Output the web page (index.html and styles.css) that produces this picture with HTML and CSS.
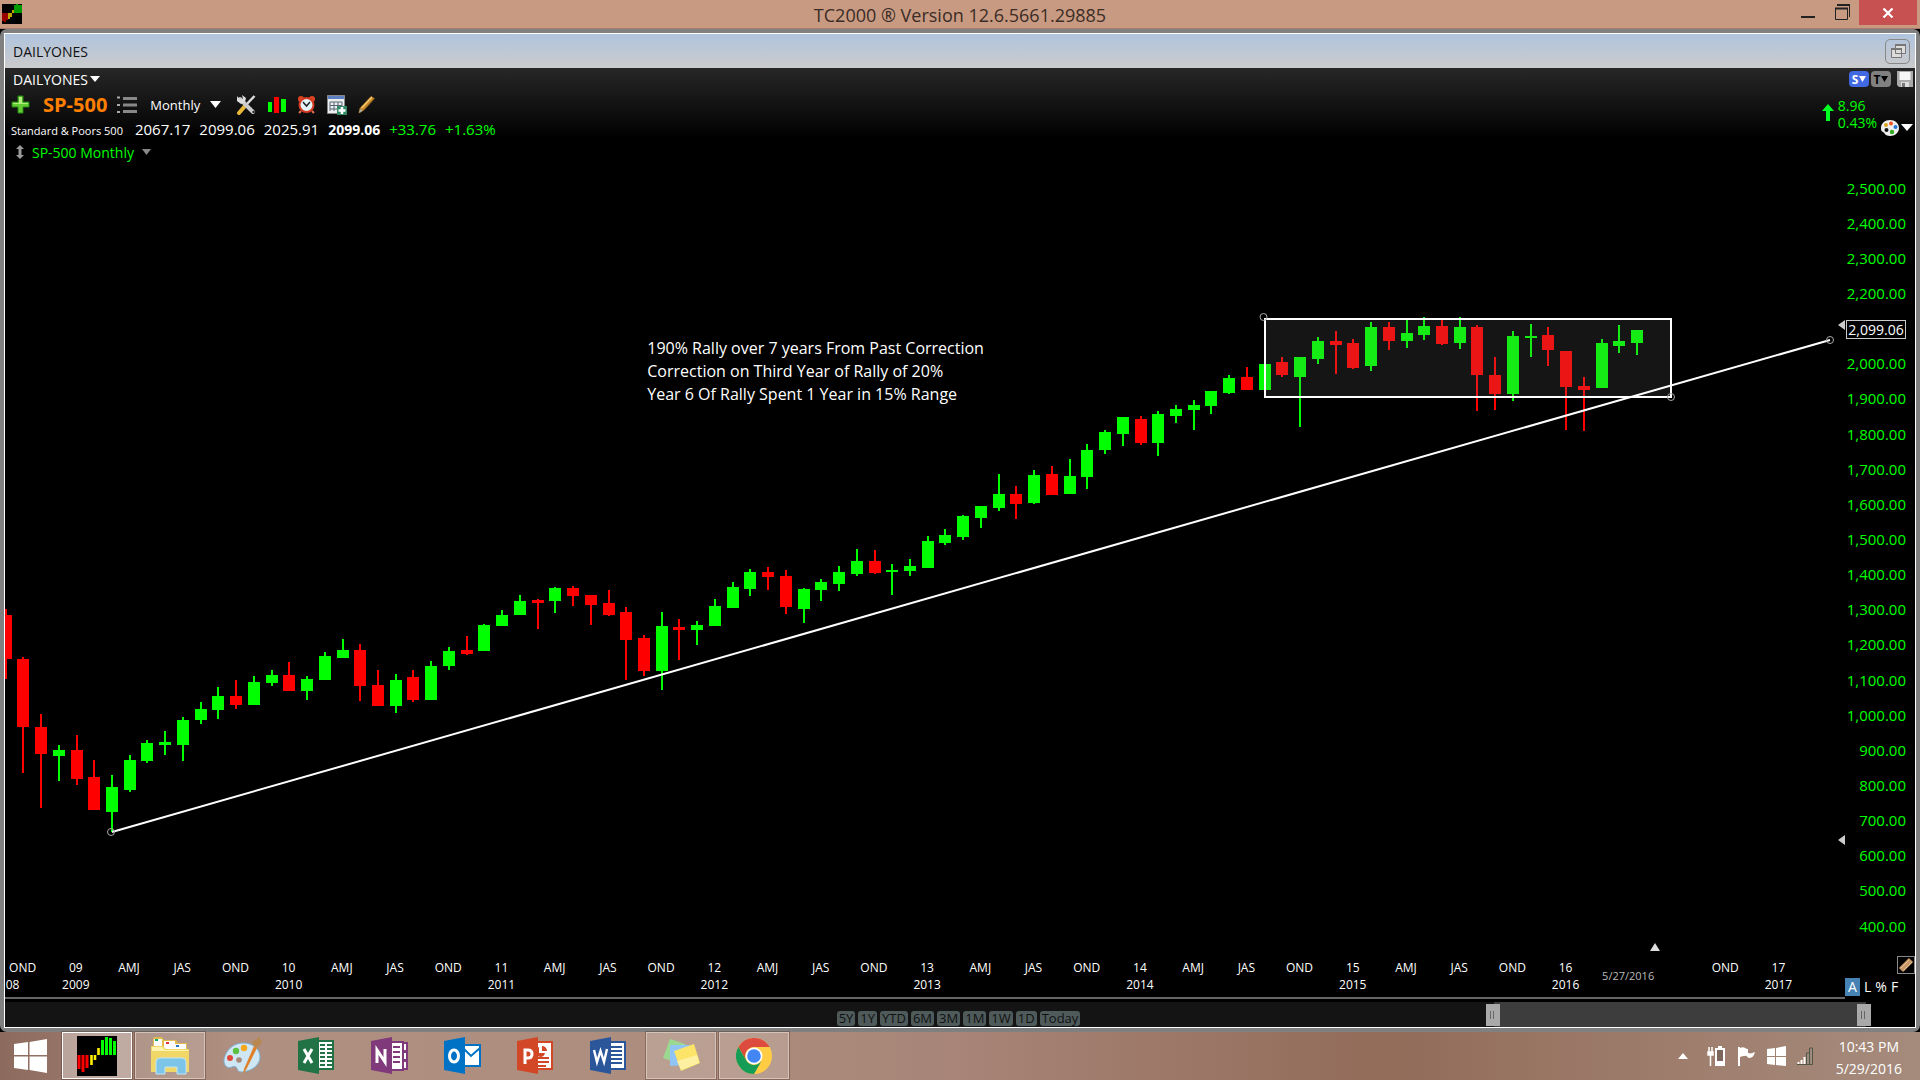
FILE: index.html
```html
<!DOCTYPE html>
<html lang="en">
<head>
    <meta charset="UTF-8">
    <meta name="viewport" content="width=device-width, initial-scale=1.0">
    <title>TC2000 ® Version 12.6.5661.29885</title>
    <link rel="stylesheet" href="styles.css">
</head>
<body>

    <header class="titlebar">
        <svg class="app-icon" viewBox="0 0 20 20"><rect width="20" height="20" fill="#000"/><path d="M1 9v8M3 9v9M5 9v7" stroke="#c00" stroke-width="1.5"/><path d="M7 9v6M9 9v4M11 6v3" stroke="#fd0" stroke-width="1.5"/><path d="M13 1v8M15 0v9M17 1v8M19 1v8" stroke="#0c0" stroke-width="1.5"/></svg>
        <h1>TC2000 ® Version 12.6.5661.29885</h1>
        <div class="window-buttons">
            <button aria-label="Minimize"><svg width="14" height="16" viewBox="0 0 14 16"><path d="M0 13h14" stroke="#222" stroke-width="2"/></svg></button>
            <button aria-label="Restore"><svg width="15" height="16" viewBox="0 0 15 16"><path d="M.5 4v11.5h12V4M2 .5h12.5V13" fill="none" stroke="#222"/><path d="M0 4.500h13M2 1h13" stroke="#222" stroke-width="2"/></svg></button>
            <button class="close" aria-label="Close"><svg width="12" height="10" viewBox="0 0 12 10"><path d="M1.500 .5l9 9m0-9l-9 9" stroke="#fff" stroke-width="2.200"/></svg></button>
        </div>
    </header>

    <main class="frame">
        <div class="frame-header">
            <h2>DAILYONES</h2>
            <button class="restore" aria-label="Restore panel"><svg width="16" height="16" viewBox="0 0 16 16"><path d="M5.500 1.500h10v9h-10zM1.500 5.500h10v9h-10z" fill="#dcdcdc" stroke="#777"/><path d="M5 2h11M1 6h11" stroke="#777" stroke-width="2"/></svg></button>
        </div>

        <div class="panel">
            <div class="top">
                <div class="top-left">
                    <div class="row layout-row">
                        <button class="menu">DAILYONES<svg width="10" height="6" viewBox="0 0 10 6"><path d="M0 0h10l-5 6z" fill="#fff"/></svg></button>
                    </div>
                    <div class="row tools">
                        <button aria-label="Add"><svg width="19" height="19" viewBox="0 0 19 19"><path d="M7 1h5v6h6v5h-6v6H7v-6H1V7h6z" fill="#6c3" stroke="#281"/><path d="M8 2h3v6h6v1H2V8h6z" fill="#b4ec80"/></svg></button>
                        <button class="symbol">SP-500</button>
                        <button class="list" aria-label="Watchlist"><svg width="20" height="18" viewBox="0 0 20 18"><path d="M6 2.500h14M6 9h14M6 15.500h14" stroke="#888" stroke-width="3"/><path d="M0 1.500h3M0 9h3M0 16h3" stroke="#aaa" stroke-width="2"/></svg></button>
                        <button class="period">Monthly<svg width="11" height="7" viewBox="0 0 11 7"><path d="M0 0h11L5.500 7z" fill="#fff"/></svg></button>
                        <button class="tool" aria-label="Settings"><svg width="21" height="20" viewBox="0 0 21 20"><path d="M18.500 1L9 11" stroke="#ddd" stroke-width="2.500"/><path d="M9 11l-6 7" stroke="#e8b838" stroke-width="4" stroke-linecap="round"/><path d="M4 4l13 13" stroke="#ccc" stroke-width="4" stroke-linecap="round"/><path d="M1 1v5l4 3 4-2 1-4-4-3 1 4-3 1z" fill="#ddd"/><circle cx="17.500" cy="17" r="1.200" fill="#222"/></svg></button>
                        <button class="tool" aria-label="Chart type"><svg width="18" height="18" viewBox="0 0 18 18"><path d="M0 6h4v10H0zM13 3h5v13h-5z" fill="#0f0"/><path d="M6 1h5v16H6z" fill="red"/></svg></button>
                        <button class="tool" aria-label="Alerts"><svg width="19" height="19" viewBox="0 0 19 19"><path d="M4 16l-2 2M15 16l2 2" stroke="#e87050" stroke-width="2"/><circle cx="4" cy="4" r="3" fill="#d42"/><circle cx="15" cy="4" r="3" fill="#d42"/><circle cx="9.500" cy="10" r="7" fill="#e4f4fa" stroke="#d43a20" stroke-width="2"/><path d="M6 7l3.500 4L13 7" fill="none" stroke="#222" stroke-width="1.500"/></svg></button>
                        <button class="tool" aria-label="Calendar"><svg width="20" height="20" viewBox="0 0 20 20"><path d="M.5.5h17v18H.5z" fill="#eee" stroke="#888"/><path d="M1 1h16v3H1z" fill="#5b7fc0"/><path d="M3 7h12M3 10.500h12M3 14h12M3 7v9M7 7v9M11 7v9M15 7v4" stroke="#567" fill="none"/><path d="M10 11h10v9H10z" fill="#386"/><path d="M15 12v7M11.500 15.500h7" stroke="#fff" stroke-width="2.500"/></svg></button>
                        <button class="tool" aria-label="Draw"><svg width="18" height="19" viewBox="0 0 18 19"><path d="M1 18l1-5L13 1.500l3.500 2L6 15z" fill="#c8892c" stroke="#8a5a18"/><path d="M3.500 13L14 2" stroke="#f4cc70" stroke-width="1.500"/><path d="M1 18l1-4 3 1.500z" fill="#aaa"/></svg></button>
                    </div>
                    <div class="row quote">
                        <span class="name">Standard &amp; Poors 500</span>
                        <span>2067.17</span><span>2099.06</span><span>2025.91</span><strong>2099.06</strong>
                        <span class="up">+33.76</span><span class="up">+1.63%</span>
                    </div>
                    <div class="row">
                        <button class="legend"><svg width="8" height="14" viewBox="0 0 8 14"><path d="M4 0l4 4H5.500v6H8l-4 4-4-4h2.500V4H0z" fill="#999"/></svg>SP-500 Monthly<svg width="9" height="6" viewBox="0 0 9 6"><path d="M0 0h9L4.500 6z" fill="#888"/></svg></button>
                    </div>
                </div>
                <div class="top-right">
                    <div class="badges">
                        <button class="badge blue">S<svg width="7" height="6" viewBox="0 0 7 6"><path d="M0 0h7L3.500 6z" fill="#fff"/></svg></button>
                        <button class="badge">T<svg width="7" height="6" viewBox="0 0 7 6"><path d="M0 0h7L3.500 6z"/></svg></button>
                        <button class="save" aria-label="Save"><svg width="16" height="16" viewBox="0 0 16 16"><path d="M0 0h16v16H2l-2-2z" fill="#aaa"/><path d="M2.500 1h11v8h-11z" fill="#f6f6f6"/><path d="M4 11h8v5H4z" fill="#ddd"/><path d="M5 12h3v4H5z" fill="#777"/></svg></button>
                    </div>
                    <div class="change">
                        <svg width="12" height="17" viewBox="0 0 12 17"><path d="M6 0l6 7H8v10H4V7H0z" fill="#0f2"/></svg>
                        <p>8.96<br>0.43%</p>
                        <button class="palette" aria-label="Colors"><svg width="32" height="16" viewBox="0 0 32 16"><path d="M9 0c5 0 9 3.500 9 8s-4 8-9 8-5-3-7-4-2-2-2-4c0-4.500 4-8 9-8z" fill="#eee"/><circle cx="5" cy="5" r="2" fill="#dba520"/><circle cx="10" cy="3.500" r="2" fill="#e52"/><circle cx="14.500" cy="7" r="2" fill="#27d"/><circle cx="11" cy="12" r="2.200" fill="#3a2"/><circle cx="5.500" cy="10" r="2" fill="#111"/><path d="M20 4h12l-6 7z" fill="#fff"/></svg></button>
                    </div>
                </div>
            </div>

            <div class="chart">
                <div class="plot">
                    <svg id="candles" viewBox="5 170 1835 773" preserveAspectRatio="none">
                        <g id="bars"></g>
                        <rect x="1265" y="319" width="406" height="78" fill="#808080" fill-opacity=".16" stroke="#fff" stroke-width="2"/>
                        <path d="M112 832L1830 340" stroke="#fff" stroke-width="2"/>
                        <g fill="none" stroke="#aaa"><circle cx="111" cy="832" r="3.500"/><circle cx="1830" cy="340" r="3.500"/><circle cx="1263.500" cy="317" r="3.500"/><circle cx="1671" cy="397" r="3.500"/></g>
                        <path d="M1838 325l7-5v10zM1838 840l7-5v10z" fill="#ccc"/>
                    </svg>
                    <p class="note">190% Rally over 7 years From Past Correction<br>Correction on Third Year of Rally of 20%<br>Year 6 Of Rally Spent 1 Year in 15% Range</p>
                </div>
                <div class="prices" id="prices"></div>
            </div>

            <div class="bottom">
                <div class="dates">
                    <div class="marker"><svg width="10" height="8" viewBox="0 0 10 8"><path d="M5 0l5 8H0z" fill="#ddd"/></svg></div>
                    <div class="ticks" id="ticks"></div>
                    <div class="last-date">5/27/2016</div>
                </div>
                <div class="scale">
                    <button class="edit" aria-label="Edit scale"><svg width="16" height="16" viewBox="0 0 16 16"><path d="M3 13L13 3" stroke="#c89a6a" stroke-width="6"/><path d="M3 11l8-8M6 13l8-8" stroke="#f0d0a0" stroke-dasharray="2 1"/></svg></button>
                    <div class="modes"><button class="on">A</button><button>L</button><button>%</button><button>F</button></div>
                </div>
            </div>

            <div class="scrubber">
                <div class="ranges"><button>5Y</button><button>1Y</button><button>YTD</button><button>6M</button><button>3M</button><button>1M</button><button>1W</button><button>1D</button><button>Today</button></div>
                <div class="window"><i class="grip"></i><i class="grip"></i></div>
            </div>
        </div>
    </main>

    <footer class="taskbar">
        <button class="start" aria-label="Start"><svg width="33" height="34" viewBox="0 0 33 34"><path d="M0 5l14-2v13H0zM15.500 3L33 0v16H15.500zM0 17.500h14V31L0 29zM15.500 17.500H33V34l-17.500-3z" fill="#fff"/></svg></button>
        <nav class="apps">
            <button class="active" aria-label="TC2000"><svg width="40" height="40" viewBox="0 0 40 40"><rect width="40" height="40"/><path d="M2 19v14M6 19v17M10 19v13" stroke="red" stroke-width="3"/><path d="M14.500 19v10M18 19v5M21.500 12v7" stroke="#fe0" stroke-width="2.600"/><path d="M25.500 4v15M29.500 1v18M33.500 2v17M37.500 5v14" stroke="#0f0" stroke-width="3"/></svg></button>
            <button class="open" aria-label="File Explorer"><svg width="40" height="40" viewBox="0 0 40 40"><path d="M3 3q0-2 2-2h7l2 3h12l2 3h9v29H2z" fill="#e2b94c"/><path d="M4 3h8v8H4zM14 5h11v8H14zM24 8h12v6H24z" fill="#fff"/><path d="M5 3h3v2H5z" fill="#1a6"/><path d="M16 6h3v2h-3z" fill="#d33"/><path d="M26 9h3v2h-3z" fill="#27b"/><path d="M1 10h12l3 3h23v23H1z" fill="#f0d768"/><path d="M2 11h10l3 3h23v1H2z" fill="#fff3b0"/><path d="M6 38V26q0-4 4-4h22q4 0 4 4v12h-9v-7H15v7z" fill="#7cc4e8" stroke="#bfe6f8"/></svg></button>
            <button aria-label="Paint"><svg width="40" height="38" viewBox="0 0 40 38"><path d="M20 6c10 0 17 6 17 14s-8 14-18 15c-5 0-4-3-6-5s-6 2-9 0-4-6-2-11C5 11 12 6 20 6z" fill="#cfe6f4" stroke="#7fb2d4"/><circle cx="7" cy="21" r="3" fill="#e04838"/><circle cx="13" cy="14" r="3.200" fill="#5cc040"/><circle cx="21" cy="11" r="3.200" fill="#f6a81c"/><circle cx="16" cy="23" r="2.800" fill="#a88878"/><path d="M20 37l1-5L31 9l3 2-11 22z" fill="#e08028"/><path d="M30 8l-1-4q5 0 6-4l4 4q-1 4-5 7z" fill="#b88850"/></svg></button>
            <button aria-label="Excel"><svg width="37" height="37" viewBox="0 0 37 37"><path d="M20 4h15v28H20z" fill="#fff" stroke="#217346" stroke-width="2"/><path d="M22 8h5M22 12h5M22 16h5M22 20h5M22 24h5M22 28h5M29 8h5M29 12h5M29 16h5M29 20h5M29 24h5M29 28h5" stroke="#217346" stroke-width="2"/><path d="M0 4l21-4v37L0 33z" fill="#217346"/><path d="M6 12l8 14M14 12L6 26" stroke="#fff" stroke-width="3"/></svg></button>
            <button aria-label="OneNote"><svg width="37" height="37" viewBox="0 0 37 37"><path d="M20 5h12v28H20zM32 6h4v8h-4zM32 15h4v8h-4zM32 24h4v8h-4z" fill="#fff" stroke="#80397b" stroke-width="2"/><path d="M22 10h7M22 15h7M22 20h7M22 25h7" stroke="#80397b" stroke-width="2"/><path d="M0 4l21-4v37L0 33z" fill="#80397b"/><path d="M6 26V13l8 12V12" fill="none" stroke="#fff" stroke-width="3"/></svg></button>
            <button aria-label="Outlook"><svg width="37" height="37" viewBox="0 0 37 37"><path d="M20 8h16v21H20z" fill="#fff" stroke="#0072c6" stroke-width="2"/><path d="M20 12l7 7 9-8" fill="none" stroke="#0072c6" stroke-width="2"/><path d="M0 4l21-4v37L0 33z" fill="#0072c6"/><ellipse cx="10" cy="19" rx="4.500" ry="6" fill="none" stroke="#fff" stroke-width="3"/></svg></button>
            <button aria-label="PowerPoint"><svg width="37" height="37" viewBox="0 0 37 37"><path d="M20 5h15v27H20z" fill="#fff" stroke="#d24726" stroke-width="2"/><path d="M21 21h11M21 25h11M21 29h8" stroke="#d24726" stroke-width="2"/><path d="M22 10a5 5 0 1 0 6 6h-6z" fill="#d24726"/><path d="M25 9v5h5a5 5 0 0 0-5-5z" fill="#d24726"/><path d="M0 4l21-4v37L0 33z" fill="#d24726"/><path d="M8 27V13h3q4 0 4 4t-4 4H8" fill="none" stroke="#fff" stroke-width="3"/></svg></button>
            <button aria-label="Word"><svg width="37" height="37" viewBox="0 0 37 37"><path d="M20 5h15v27H20z" fill="#fff" stroke="#2b579a" stroke-width="2"/><path d="M21 10h11M21 14h11M21 18h11M21 22h11M21 26h11" stroke="#2b579a" stroke-width="2"/><path d="M0 4l21-4v37L0 33z" fill="#2b579a"/><path d="M4 13l3 12 3.500-11L14 25l3-13" fill="none" stroke="#fff" stroke-width="2.400"/></svg></button>
            <button class="open" aria-label="Sticky Notes"><svg width="38" height="38" viewBox="0 0 38 38"><path d="M8 2l15 5-7 19-15-5z" fill="#9bd890"/><path d="M8 8h20v20l-20 1z" fill="#90c4f4"/><path d="M12 14l20-7 6 19-19 8z" fill="#fbe468"/><path d="M15 24l20-6 2 8-18 7z" fill="#fdf0a0"/></svg></button>
            <button class="open" aria-label="Chrome"><svg width="36" height="36" viewBox="0 0 36 36"><circle cx="18" cy="18" r="18" fill="#fc4"/><path d="M2.400 9a18 18 0 0 1 31.200 0H18a9 9 0 0 0-8 13z" fill="#dd4b3e"/><path d="M2.400 9A18 18 0 0 0 18 36l7.500-13A9 9 0 0 1 10 22z" fill="#159d58"/><circle cx="18" cy="18" r="8.500" fill="#fff"/><circle cx="18" cy="18" r="6.800" fill="#4285f4"/></svg></button>
        </nav>
        <div class="tray">
            <button aria-label="Show hidden icons"><svg width="10" height="6" viewBox="0 0 10 6"><path d="M5 0l5 6H0z" fill="#fff"/></svg></button>
            <button aria-label="Battery"><svg width="19" height="20" viewBox="0 0 19 20"><path d="M9 3h8v16H9zM11 1h4" fill="#7d675c" stroke="#fff" stroke-width="2"/><path d="M2 1v5M5 1v5M1 6h5v3H1zM3.500 9v11" stroke="#fff" stroke-width="1.500" fill="#fff"/><path d="M10 15h6v3h-6z" fill="#fff"/></svg></button>
            <button aria-label="Action Center"><svg width="19" height="20" viewBox="0 0 19 20"><path d="M2 1v19" stroke="#fff" stroke-width="2"/><path d="M3 2c4-2 5 1 8 1v4c3 1 4 0 7-1-1 3-2 6-6 6-2 0-2-3-4-2-2 0-3 0-5 1z" fill="#fff"/></svg></button>
            <button aria-label="Windows"><svg width="19" height="20" viewBox="0 0 19 20"><path d="M0 3l8-1v8H0zM9 2l10-2v10H9zM0 11h8v8l-8-1zM9 11h10v9L9 19z" fill="#fff"/></svg></button>
            <button aria-label="Network"><svg width="16" height="18" viewBox="0 0 16 18"><path d="M1.500 18v-3M4.500 18v-5M7.500 18v-8" stroke="#fff" stroke-width="2"/><path d="M11 17.500V6M14.500 17.500V1" stroke="#998d84" stroke-width="2"/><path d="M9.500 17.500V6h3v11.500M12.500 6V1h3v16.500H0" fill="none" stroke="#554"/></svg></button>
            <time>10:43 PM<br>5/29/2016</time>
        </div>
    </footer>

    <script>
        // high, body top, body bottom, low, d = down month
        const data = `609 615 659 679 d|657 659 727 773 d|714 727 754 808 d|745 750 756 781|735 750 779 785 d|760 777 810 810 d
775 787 812 832|755 760 790 792|740 743 761 763|731 742 745 755|717 720 745 761|702 709 720 724
687 696 710 719|680 696 705 709 d|676 682 705 705|670 675 683 686|662 675 691 691 d|676 679 691 700
652 656 680 680|639 650 658 658|644 650 686 701 d|670 685 706 706 d|674 680 706 713|670 677 700 702 d
661 666 700 700|647 651 666 670|636 650 654 655 d|624 625 651 651|610 615 626 626|595 601 615 615
599 600 603 629 d|587 588 601 613|586 588 596 606 d|595 595 605 625 d|590 603 615 616 d|607 612 640 680 d
635 638 671 676 d|612 626 671 690|619 627 630 660 d|621 625 630 645|599 606 626 626|582 587 608 608
569 572 589 596|567 572 577 590 d|570 576 607 614 d|588 589 609 623|579 582 590 601|566 572 584 591
549 561 574 576|550 561 573 574 d|564 570 572 595|559 566 571 576|536 541 568 568|529 535 543 545
515 516 537 540|506 506 518 528|474 494 508 511|486 494 504 519 d|470 475 503 504|466 474 495 495 d
459 476 494 494|444 450 477 489|430 432 450 454|417 417 434 446|416 419 443 445 d|411 414 443 456
405 409 416 423|400 405 410 430|391 391 406 414|375 378 393 394|367 377 390 390 d|363 364 390 398
357 362 375 377 d|357 357 377 427|337 341 359 364|331 341 345 374 d|339 343 368 369 d|322 327 366 371
322 327 341 350 d|320 333 341 348|317 326 335 340|319 326 344 345 d|317 327 343 349|325 327 375 411 d
357 375 394 410 d|331 336 394 401|324 336 338 357|327 335 350 366 d|351 351 387 430 d|377 386 390 431 d
339 343 388 388|325 341 346 353|330 330 343 355`.split(/[|\n]/);

        let bars = '';
        data.forEach((row, i) => {
            const [high, top, bottom, low, down] = row.split(' ');
            const x = Math.round(5.6 + i * 17.733);
            bars += `<path fill="${down ? '#f00' : '#0f0'}" d="M${x - 6} ${top}h12V${bottom}h-12zM${x - 1} ${high}h2V${low}h-2z"/>`;
        });
        document.getElementById('bars').innerHTML = bars;

        let prices = '';
        for (let p = 2500; p >= 400; p -= 100) {
            prices += p === 2100 ? '<span><b>2,099.06</b></span>' : `<span>${p.toLocaleString('en-US')}.00</span>`;
        }
        document.getElementById('prices').innerHTML = prices;

        const quarters = ['', 'AMJ', 'JAS', 'OND'];
        let ticks = '<div>OND<br><span class="first-year">08</span></div>';
        for (let i = 0; i < 33; i++) {
            const year = 2009 + Math.floor(i / 4);
            const label = i % 4 ? quarters[i % 4] : String(year).slice(2) + '<br>' + year;
            ticks += `<div>${i === 29 || i === 30 ? '' : label}</div>`;
        }
        document.getElementById('ticks').innerHTML = ticks;
    </script>
</body>
</html>
```
FILE: styles.css
```css
* {
    box-sizing: border-box;
}
body {
    margin: 0;
    min-height: 100vh;
    display: flex;
    flex-direction: column;
    background: #000;
    color: #fff;
    font-family: "Open Sans", "Noto Sans", sans-serif;
    font-size: 14px;
    overflow: hidden;
}
h1, h2, p {
    margin: 0;
    font-weight: normal;
}
button {
    margin: 0;
    padding: 0;
    border: none;
    background: none;
    color: inherit;
    font: inherit;
    display: flex;
    align-items: center;
    justify-content: center;
    cursor: pointer;
}
svg {
    display: block;
    flex: none;
}

/* title bar */
.titlebar {
    display: grid;
    grid-template-columns: 1fr auto 1fr;
    height: 29px;
    background: #c99a82;
    border-bottom: 1px solid #a87c68;
}
.app-icon {
    width: 20px;
    height: 20px;
    margin: 4px 2px;
}
.titlebar h1 {
    color: #3a2c26;
    font-size: 18px;
    line-height: 30px;
}
.window-buttons {
    display: flex;
    justify-content: flex-end;
    align-items: flex-start;
    padding-right: 3px;
}
.window-buttons button {
    width: 34px;
    height: 24px;
}
.window-buttons .close {
    width: 58px;
    height: 25px;
    background: #c75050;
}

/* frame */
.frame {
    flex: 1;
    display: flex;
    flex-direction: column;
    border: 4px solid #808080;
    border-radius: 7px;
    min-height: 0;
}
.frame-header {
    display: flex;
    justify-content: space-between;
    align-items: center;
    height: 35px;
    padding: 0 5px 0 8px;
    border: 1px solid #fff;
    border-bottom: none;
    background: linear-gradient(#b0c4de, #cbcbcb);
    color: #111;
}
.frame-header h2 {
    font-size: 14px;
}
.restore {
    width: 25px;
    height: 25px;
    border: 1px solid #888;
    border-radius: 5px;
}
.panel {
    flex: 1;
    display: flex;
    flex-direction: column;
    border: 1px solid #fff;
    border-top: none;
    background: #000 linear-gradient(#272727, #000 70px) no-repeat;
    overflow: hidden;
}

/* toolbar */
.top {
    display: flex;
    justify-content: space-between;
    height: 102px;
}
.row {
    display: flex;
    align-items: center;
    height: 22px;
    padding-left: 6px;
}
.layout-row {
    padding-left: 8px;
}
.menu {
    gap: 2px;
    font-size: 14px;
}
.tools {
    height: 29px;
}
.symbol {
    margin-left: 13px;
    color: #ff8000;
    font-size: 20px;
    font-weight: bold;
}
.list {
    margin-left: 10px;
}
.period {
    gap: 10px;
    margin: 0 4px 0 13px;
    font-size: 13px;
}
.tool {
    margin-left: 11px;
}
.quote {
    align-items: baseline;
    gap: 9px;
    font-size: 15px;
}
.quote .name {
    margin-right: 3px;
    font-size: 11px;
}
.quote strong {
    font-size: 14px;
}
.up, .legend, .change {
    color: #0f0;
}
.legend {
    gap: 8px;
    margin-left: 5px;
}
.badges {
    display: flex;
    justify-content: flex-end;
    gap: 2px;
    padding: 3px 2px 0 0;
}
.badge {
    gap: 1px;
    width: 20px;
    height: 16px;
    border-radius: 4px;
    background: #808080;
    color: #000;
    font-size: 12px;
    font-weight: bold;
}
.blue {
    background: #4169e1;
    color: #fff;
}
.save {
    margin-left: 4px;
}
.change {
    display: flex;
    align-items: center;
    justify-content: flex-end;
    gap: 4px;
    padding: 5px 2px 0 0;
    line-height: 17px;
}
.change > svg {
    margin-bottom: 4px;
}
.palette {
    margin-top: 28px;
}

/* chart */
.chart {
    flex: 1;
    display: grid;
    grid-template-columns: 1fr 75px;
    min-height: 0;
}
.plot {
    position: relative;
    min-height: 0;
}
.plot svg {
    position: absolute;
    width: 100%;
    height: 100%;
    overflow: visible;
}
.note {
    position: absolute;
    left: 35%;
    top: 21.600%;
    font-size: 16px;
    line-height: 23px;
}
.prices {
    display: flex;
    flex-direction: column;
    padding-right: 9px;
    color: #0f0;
    font-size: 15px;
    text-align: right;
}
.prices span {
    flex: 1;
    display: flex;
    align-items: center;
    justify-content: flex-end;
}
.prices b {
    width: 60px;
    border: 1px solid #ccc;
    color: #fff;
    font-size: 14px;
    font-weight: normal;
    line-height: 17px;
    text-align: center;
    margin-top: 2px;
}

/* date axis */
.bottom {
    display: grid;
    grid-template-columns: 1fr 70px;
    height: 56px;
}
.dates {
    position: relative;
    padding-top: 16px;
    border-bottom: 2px solid #666;
}
.marker {
    position: absolute;
    left: 89.400%;
    top: 0;
}
.ticks {
    display: grid;
    grid-template-columns: repeat(34, 1fr);
    margin: 0 40px 0 -9px;
    font-size: 12px;
    line-height: 17px;
    text-align: center;
}
.first-year {
    margin-right: 20px;
}
.last-date {
    position: absolute;
    left: 86.800%;
    top: 25px;
    color: #bbb;
    font-size: 11px;
}
.scale {
    display: flex;
    flex-direction: column;
    align-items: flex-end;
    padding-top: 13px;
}
.edit {
    width: 18px;
    height: 18px;
    border: 1px solid #888;
}
.modes {
    display: flex;
    gap: 4px;
    width: 70px;
    margin-top: 4px;
    line-height: 18px;
}
.modes .on {
    width: 15px;
    background: #4682b4;
}

/* range scrubber */
.scrubber {
    position: relative;
    display: flex;
    justify-content: center;
    align-items: flex-end;
    height: 28px;
    margin-right: 49px;
    border-top: 3px solid #000;
    background: #141414;
}
.ranges {
    display: flex;
    gap: 3px;
    margin-left: 46px;
    margin-bottom: 1px;
}
.ranges button {
    padding: 0 2px;
    border-radius: 3px;
    background: #4f5b5b;
    color: #111;
    font-size: 13px;
    line-height: 15px;
}
.window {
    position: absolute;
    top: 0;
    bottom: 0;
    right: 0;
    left: 80%;
    display: flex;
    justify-content: space-between;
    align-items: center;
    background: #3d3d3d;
}
.grip {
    width: 14px;
    height: 22px;
    margin: 0 -5px 0 -8px;
    border: 4px solid #a9a9a9;
    border-width: 7px 4px;
    background: repeating-linear-gradient(90deg, #666 0 1px, #a9a9a9 1px 3px);
}

/* taskbar */
.taskbar {
    display: flex;
    height: 48px;
    background: linear-gradient(90deg, #8c6a5e, #ae8f80 12%, #ad8e7e 35%, #a78477 50%, #926b59 72%, #a08070 90%, #a58b7c);
}
.start {
    width: 60px;
}
.apps {
    display: flex;
    flex: 1;
    gap: 3px;
    padding-left: 2px;
}
.apps button {
    width: 70px;
    height: 47px;
}
.apps .open, .apps .active {
    border: 1px solid #d5c2b9;
    background: rgba(255, 255, 255, 0.16);
    outline: 1px solid rgba(80, 50, 40, 0.4);
}
.apps .active {
    border: 1px solid #fff;
    background: rgba(255, 255, 255, 0.35);
}
.tray {
    display: flex;
    align-items: center;
    gap: 11px;
    padding-right: 18px;
}
.tray button:first-child {
    margin-right: 8px;
}
.tray time {
    margin-left: 12px;
    padding-top: 3px;
    line-height: 22px;
    text-align: center;
}
```
